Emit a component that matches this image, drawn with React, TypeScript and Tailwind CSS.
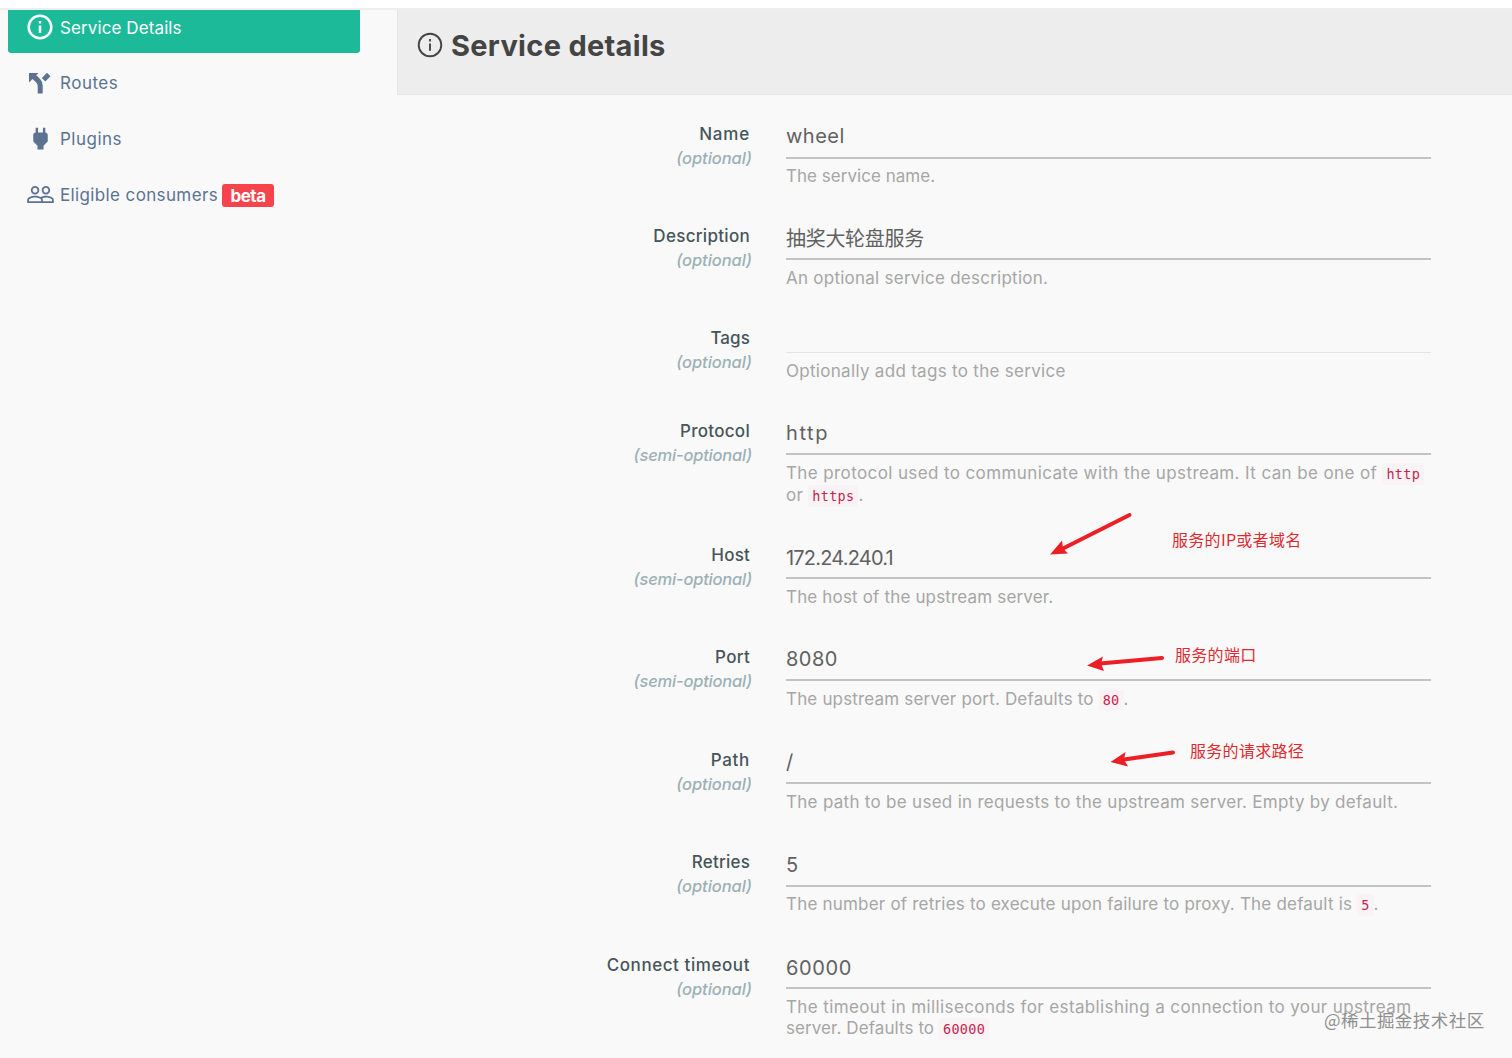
import { Fragment, type ReactNode } from "react"

interface Field {
  label: string
  labelTracking: string
  requirement: "optional" | "semi-optional"
  value: string
  valueClass: string
  rowClass: string
  inputClass: string
  helpClass: string
  help: ReactNode[]
}

const Code = ({ children }: { children: string }) => (
  <code className="rounded-[3px] bg-[#faf3f5] px-1 py-[3px] font-['DejaVu_Sans_Mono',monospace] text-[13.5px] tracking-[0.3px] text-[#c7254e]">
    {children}
  </code>
)

const Line = ({ tracking, children }: { tracking: string; children: ReactNode }) => (
  <span className={`block whitespace-nowrap ${tracking}`}>{children}</span>
)

const FIELDS: Field[] = [
  {
    label: "Name",
    labelTracking: "tracking-[0.8px]",
    requirement: "optional",
    value: "wheel",
    valueClass: "tracking-[0.5px]",
    rowClass: "h-[102px]",
    inputClass: "h-[38px] border-b-2 border-[#c3c3c3] pt-px",
    helpClass: "pt-[7px]",
    help: [<Line tracking="tracking-[0.03px]">The service name.</Line>],
  },
  {
    label: "Description",
    labelTracking: "tracking-[0.3px]",
    requirement: "optional",
    value: "抽奖大轮盘服务",
    valueClass: "tracking-[-0.3px]",
    rowClass: "h-[102px]",
    inputClass: "h-[37px] border-b-2 border-[#c3c3c3] pt-[2px]",
    helpClass: "pt-[8px]",
    help: [<Line tracking="tracking-[0.25px]">An optional service description.</Line>],
  },
  {
    label: "Tags",
    labelTracking: "tracking-[0.1px]",
    requirement: "optional",
    value: "",
    valueClass: "",
    rowClass: "h-[93px]",
    inputClass: "h-[28px] border-b border-[#e4e4e4]",
    helpClass: "pt-[8px]",
    help: [<Line tracking="tracking-[0.3px]">Optionally add tags to the service</Line>],
  },
  {
    label: "Protocol",
    labelTracking: "tracking-[0.3px]",
    requirement: "semi-optional",
    value: "http",
    valueClass: "tracking-[1.6px]",
    rowClass: "h-[124px]",
    inputClass: "h-[37px] border-b-2 border-[#c3c3c3] pt-px",
    helpClass: "pt-[8px]",
    help: [
      <Line tracking="tracking-[0.39px]">
        The protocol used to communicate with the upstream. It can be one of <Code>http</Code>
      </Line>,
      <Line tracking="tracking-[0.3px]">
        or <Code>https</Code>.
      </Line>,
    ],
  },
  {
    label: "Host",
    labelTracking: "tracking-[0.2px]",
    requirement: "semi-optional",
    value: "172.24.240.1",
    valueClass: "tracking-[-0.8px]",
    rowClass: "h-[102px]",
    inputClass: "h-[37px] border-b-2 border-[#c3c3c3] pt-[2px]",
    helpClass: "pt-[8px]",
    help: [<Line tracking="tracking-[0.16px]">The host of the upstream server.</Line>],
  },
  {
    label: "Port",
    labelTracking: "tracking-[0.3px]",
    requirement: "semi-optional",
    value: "8080",
    valueClass: "tracking-[0.5px]",
    rowClass: "h-[103px]",
    inputClass: "h-[37px] border-b-2 border-[#c3c3c3] pt-px",
    helpClass: "pt-[8px]",
    help: [
      <Line tracking="tracking-[0.17px]">
        The upstream server port. Defaults to <Code>80</Code>.
      </Line>,
    ],
  },
  {
    label: "Path",
    labelTracking: "tracking-[0.7px]",
    requirement: "optional",
    value: "/",
    valueClass: "",
    rowClass: "h-[102px]",
    inputClass: "h-[37px] border-b-2 border-[#c3c3c3] pt-px",
    helpClass: "pt-[8px]",
    help: [
      <Line tracking="tracking-[0.29px]">
        The path to be used in requests to the upstream server. Empty by default.
      </Line>,
    ],
  },
  {
    label: "Retries",
    labelTracking: "tracking-[0.2px]",
    requirement: "optional",
    value: "5",
    valueClass: "",
    rowClass: "h-[103px]",
    inputClass: "h-[38px] border-b-2 border-[#c3c3c3] pt-[2px]",
    helpClass: "pt-[7px]",
    help: [
      <Line tracking="tracking-[0.2px]">
        The number of retries to execute upon failure to proxy. The default is <Code>5</Code>.
      </Line>,
    ],
  },
  {
    label: "Connect timeout",
    labelTracking: "tracking-[0.57px]",
    requirement: "optional",
    value: "60000",
    valueClass: "tracking-[0.6px]",
    rowClass: "h-[92px]",
    inputClass: "h-[37px] border-b-2 border-[#c3c3c3] pt-[2px]",
    helpClass: "pt-[8px]",
    help: [
      <Line tracking="tracking-[0.375px]">
        The timeout in milliseconds for establishing a connection to your upstream
      </Line>,
      <Line tracking="tracking-[0.08px]">
        server. Defaults to <Code>60000</Code>
      </Line>,
    ],
  },
]

const InfoIcon = ({ strokeWidth }: { strokeWidth: number }) => (
  <svg viewBox="0 0 26 26" className="size-[26px] shrink-0" fill="none">
    <circle cx="13" cy="13" r="11.3" stroke="currentColor" strokeWidth={strokeWidth} />
    <path d="M13 11.5v7.2M13 7v2.4" stroke="currentColor" strokeWidth={strokeWidth} />
  </svg>
)

const ForkIcon = () => (
  <svg viewBox="0 0 24 24" className="size-6 shrink-0" fill="currentColor">
    <path d="M1 2h9.500L8.300 4.200 12.300 8.300Q14.700 11 14.700 14.500V22.500h-5V15Q9.700 13 8 11.200L4.500 8 1 11.500zM19 1.800l3.500 3.500-5.200 5.200-3.500-3.500z" />
  </svg>
)

const PlugIcon = () => (
  <svg viewBox="0 0 24 24" className="size-[29px] shrink-0" fill="currentColor">
    <path d="M16 7V3h-2v4h-4V3H8v4C7 7 6 8 6 9v5.500L9.500 18v3h5v-3l3.500-3.500V9c0-1-1-2-2-2z" />
  </svg>
)

const PeopleIcon = () => (
  <svg viewBox="0 0 24 24" className="size-[29px] shrink-0" fill="currentColor">
    <path d="M16.500 13c-1.200 0-3.070.34-4.500 1-1.430-.67-3.300-1-4.500-1C5.330 13 1 14.080 1 16.250V19h22v-2.750c0-2.170-4.330-3.250-6.500-3.250zm-4 4.500h-10v-1.250c0-.54 2.560-1.750 5-1.750s5 1.210 5 1.750v1.250zm9 0H14v-1.250c0-.46-.2-.86-.52-1.220.88-.3 1.960-.53 3.020-.53 2.440 0 5 1.210 5 1.750v1.250zM7.500 12c1.930 0 3.500-1.570 3.500-3.500S9.430 5 7.500 5 4 6.570 4 8.500 5.570 12 7.500 12zm0-5.500c1.100 0 2 .9 2 2s-.9 2-2 2-2-.9-2-2 .9-2 2-2zm9 5.500c1.930 0 3.500-1.570 3.500-3.500S18.430 5 16.500 5 13 6.570 13 8.500s1.570 3.500 3.500 3.500zm0-5.500c1.100 0 2 .9 2 2s-.9 2-2 2-2-.9-2-2 .9-2 2-2z" />
  </svg>
)

const NAV_ITEMS = [
  { label: "Routes", icon: <ForkIcon />, tracking: "tracking-[0.5px]" },
  { label: "Plugins", icon: <PlugIcon />, tracking: "tracking-[0.5px]" },
  { label: "Eligible consumers", icon: <PeopleIcon />, tracking: "tracking-[0.37px]", badge: "beta" },
]

function Sidebar() {
  return (
    <nav className="w-[397px] shrink-0 pl-2 text-[17px] text-[#5b7391]">
      <div className="flex h-[43px] w-[352px] items-start rounded-b-[3px] bg-[#1dba9a] pt-[4px] pl-[19px] text-white">
        <InfoIcon strokeWidth={2.5} />
        <span className="ml-[7px] pt-px leading-[26px] tracking-[0.1px]">Service Details</span>
      </div>
      <ul className="mt-[2px]">
        {NAV_ITEMS.map((item) => (
          <li key={item.label} className="flex h-14 items-center pl-[17px]">
            <span className="flex w-[30px] justify-center pb-px">{item.icon}</span>
            <span className={`ml-[5px] pt-[2px] whitespace-nowrap ${item.tracking}`}>{item.label}</span>
            {item.badge && (
              <span className="ml-[4px] flex h-[23px] w-[52px] items-center justify-center rounded-[3px] bg-[#f7434c] pt-[3px] font-bold tracking-[-0.5px] text-white">
                {item.badge}
              </span>
            )}
          </li>
        ))}
      </ul>
    </nav>
  )
}

function FieldRow({ field }: { field: Field }) {
  return (
    <div className={`flex ${field.rowClass}`}>
      <div className="w-[353px] shrink-0 pt-px text-right text-[17px]">
        <div className={`leading-[25px] font-medium text-[#46555a] ${field.labelTracking}`}>{field.label}</div>
        <div
          className={`-mr-[2px] text-[16.5px] leading-[23px] font-medium text-[#9cb1b6] italic ${
            field.requirement === "optional" ? "tracking-[-0.05px]" : "tracking-[-0.2px]"
          }`}
        >
          ({field.requirement})
        </div>
      </div>
      <div className="ml-9 w-[645px]">
        <div className={`text-[20px] leading-[28px] text-[#616161] ${field.inputClass}`}>
          <span className={field.valueClass}>{field.value}</span>
        </div>
        <div className={`text-[17px] leading-[21px] text-[#a6a6a6] ${field.helpClass}`}>
          {field.help.map((line, i) => (
            <Fragment key={i}>{line}</Fragment>
          ))}
        </div>
      </div>
    </div>
  )
}

// Hand-placed callouts that lie over the form
function Annotations() {
  return (
    <div className="pointer-events-none absolute inset-0 font-['Noto_Sans_CJK_SC',sans-serif] text-[16px] leading-6 tracking-[0.3px] whitespace-nowrap text-[#dd2a31]">
      <svg viewBox="0 0 1512 1058" className="absolute inset-0 h-[1058px] w-[1512px]" fill="#ec1f27" stroke="#ec1f27">
        <path d="M1129.500 515L1063 548.500M1162 658L1100 663.500M1173 752.500L1124 759.500" strokeWidth="4" strokeLinecap="round" />
        <path d="M1050 554.500L1062 540.500 1063 548.500 1068 553.500zM1087 665.500L1103 656.500 1101 663.500 1104 671zM1110.500 762L1125.500 752 1124 759.500 1128 766.500z" stroke="none" />
      </svg>
      <span className="absolute top-[527px] left-[1172px]">服务的IP或者域名</span>
      <span className="absolute top-[642px] left-[1175px]">服务的端口</span>
      <span className="absolute top-[738px] left-[1190px]">服务的请求路径</span>
      <span className="absolute top-[1008px] left-[1324px] text-[17.5px] tracking-[0.45px] text-[#8f8f8f]">
        @稀土掘金技术社区
      </span>
    </div>
  )
}

export default function App() {
  return (
    <div className="relative h-[1058px] w-[1512px] overflow-hidden bg-[#f9f9f9] font-['Inter','Noto_Sans_CJK_SC',sans-serif]">
      <div className="h-[10px] border-b-2 border-[#eeeeee] bg-white" />
      <div className="flex">
        <Sidebar />
        <main className="w-[1115px] shrink-0">
          <header className="flex h-[85px] items-start border-b border-l border-[#e6e6e6] bg-[#ededed] pt-[22px] pl-[19px] text-[#444444]">
            <InfoIcon strokeWidth={1.9} />
            <h1 className="-mt-[4px] ml-[8px] text-[29px] leading-[36px] font-bold tracking-[0.3px] whitespace-nowrap">
              Service details
            </h1>
          </header>
          <div className="pt-[26px]">
            {FIELDS.map((field) => (
              <FieldRow key={field.label} field={field} />
            ))}
          </div>
        </main>
      </div>
      <Annotations />
    </div>
  )
}
